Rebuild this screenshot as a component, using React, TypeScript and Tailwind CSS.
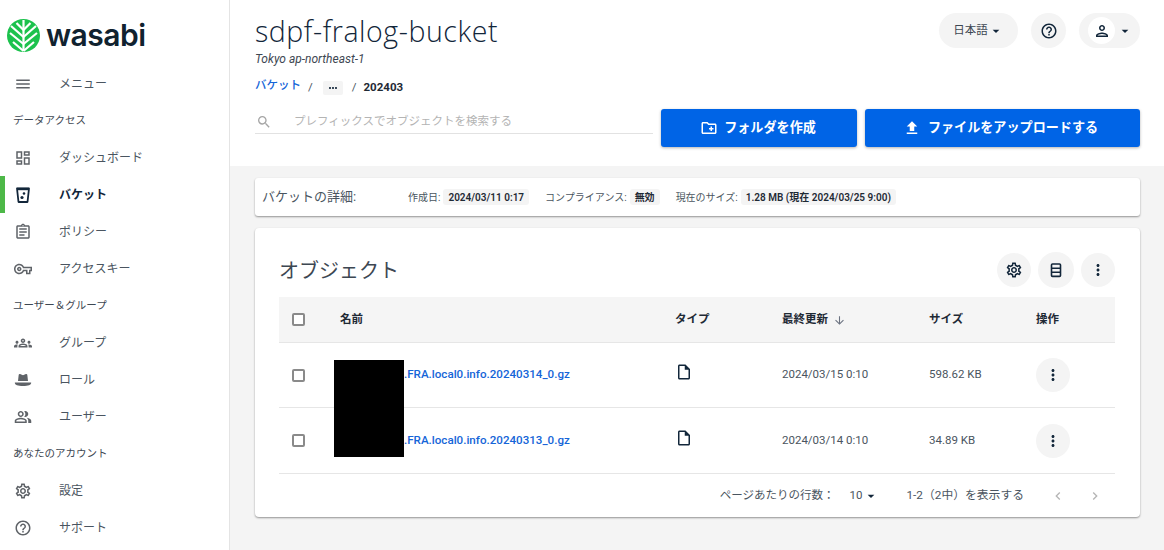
import {
  MdMenu,
  MdOutlineDashboard,
  MdOutlineAssignment,
  MdOutlineVpnKey,
  MdOutlineGroups,
  MdOutlinePeopleAlt,
  MdOutlineSettings,
  MdHelpOutline,
  MdOutlineInsertDriveFile,
  MdMoreVert,
  MdMoreHoriz,
  MdFileUpload,
  MdOutlineCreateNewFolder,
  MdSearch,
  MdArrowDropDown,
  MdOutlinePerson,
  MdArrowDownward,
  MdChevronLeft,
  MdChevronRight,
} from 'react-icons/md';

function BucketIcon() {
  return (
    <svg className="w-[18px] h-[18px]" viewBox="0 0 18 18" fill="none">
      <path d="M3 2.500h12L13.500 16h-9L3 2.500z" stroke="#12263a" strokeWidth="1.800" strokeLinejoin="round" />
      <path d="M3 3h12" stroke="#12263a" strokeWidth="2.400" />
      <circle cx="10" cy="7.500" r="1.300" fill="#12263a" />
      <circle cx="8" cy="11.500" r="1.600" fill="#12263a" />
    </svg>
  );
}

function HatIcon() {
  return (
    <svg className="w-[18px] h-[18px]" viewBox="0 0 18 18" fill="#5f6368">
      <path d="M4 10l.7-6.200c.1-.7.8-1 1.400-.7L9 4.200l2.900-1.100c.6-.3 1.300 0 1.400.7L14 10H4z" />
      <path d="M.8 11.500h16.400c0 2.600-3 3.500-8.200 3.500S.8 14.100.8 11.500z" />
    </svg>
  );
}

function LogoMark() {
  return (
    <svg className="w-[33px] h-[33px] shrink-0" viewBox="0 0 33 33">
      <circle cx="16.500" cy="16.500" r="16.500" fill="#1cc24d" />
      <g fill="none" stroke="#fff" strokeWidth="2.200">
        <path d="M16.500 1v31" />
        <path d="M16.500 11L9.500 4M16.500 11l7-7" />
        <path d="M16.500 18L4 7M16.500 18L29 7" />
        <path d="M16.500 25L3 14M16.500 25L30 14" />
        <path d="M16.500 32L6 23M16.500 32L27 23" />
      </g>
    </svg>
  );
}

function TableIcon() {
  return (
    <svg className="w-[18px] h-[18px]" viewBox="0 0 18 18" fill="none" stroke="#12263a" strokeWidth="1.600">
      <rect x="4.500" y="3" width="9" height="12.400" rx="1" />
      <path d="M4.500 7.200h9M4.500 11.200h9" />
    </svg>
  );
}

function Checkbox() {
  return <span className="block w-[13px] h-[13px] rounded-[2px] border-2 border-[#8a8a8a] bg-white" />;
}

const sideIcon = 'w-[18px] h-[18px] text-[#5f6368]';

const sidebar = [
  { label: 'メニュー', icon: <MdMenu className={sideIcon} /> },
  { section: 'データアクセス' },
  { label: 'ダッシュボード', icon: <MdOutlineDashboard className={sideIcon} /> },
  { label: 'バケット', icon: <BucketIcon />, active: true },
  { label: 'ポリシー', icon: <MdOutlineAssignment className={sideIcon} /> },
  { label: 'アクセスキー', icon: <MdOutlineVpnKey className={sideIcon} /> },
  { section: 'ユーザー＆グループ' },
  { label: 'グループ', icon: <MdOutlineGroups className={sideIcon} /> },
  { label: 'ロール', icon: <HatIcon /> },
  { label: 'ユーザー', icon: <MdOutlinePeopleAlt className={sideIcon} /> },
  { section: 'あなたのアカウント' },
  { label: '設定', icon: <MdOutlineSettings className={sideIcon} /> },
  { label: 'サポート', icon: <MdHelpOutline className={sideIcon} /> },
];

const files = [
  { name: '.FRA.local0.info.20240314_0.gz', updated: '2024/03/15 0:10', size: '598.62 KB' },
  { name: '.FRA.local0.info.20240313_0.gz', updated: '2024/03/14 0:10', size: '34.89 KB' },
];

const details = [
  { label: '作成日:', value: '2024/03/11 0:17' },
  { label: 'コンプライアンス:', value: '無効' },
  { label: '現在のサイズ:', value: '1.28 MB (現在 2024/03/25 9:00)' },
];

const tableCols = 'grid grid-cols-[61px_335px_107px_147px_107px_78px] items-center';

export default function App() {
  return (
    <div className="flex w-[1164px] h-[550px] overflow-hidden bg-white text-[#12263a] font-['Roboto','Noto_Sans_CJK_JP',sans-serif]">
      <aside className="w-[230px] shrink-0 border-r border-[#e4e4e4] bg-white">
        <div className="h-[65px] flex items-center gap-[6px] pl-[7px] pt-[6px]">
          <LogoMark />
          <span className="font-['Inter',sans-serif] text-[30px] font-semibold tracking-[-0.5px] text-[#10222f] leading-none -mt-[2px]">wasabi</span>
        </div>
        {sidebar.map((item, i) =>
          item.section ? (
            <div key={i} className="h-[37px] flex items-center pl-[13px] pt-[1px] text-[10.500px] text-[#3d4752]">
              {item.section}
            </div>
          ) : (
            <div key={i} className="relative h-[37px] flex items-center pl-[14px]">
              {item.active && <span className="absolute left-0 top-0 bottom-0 w-[5px] bg-[#4db848]" />}
              <span className="w-[45px] flex">{item.icon}</span>
              <span className={`text-[12px] ${item.active ? 'font-bold text-[#12263a]' : 'text-[#4a5560]'}`}>{item.label}</span>
            </div>
          ),
        )}
      </aside>

      <main className="flex-1 bg-[#f4f4f4]">
        <header className="h-[166px] bg-white flex justify-between pl-[25px] pr-[25px]">
          <div className="w-[398px]">
            <h1 className="pt-[13px] font-['Open_Sans',sans-serif] text-[28.500px] font-light tracking-[0.55px] leading-[36px] text-[#12263a]">sdpf-fralog-bucket</h1>
            <div className="mt-[2px] text-[12px] italic leading-[16px] text-[#3d4752]">Tokyo ap-northeast-1</div>
            <div className="mt-[13px] flex items-center text-[11.500px] h-[16px]">
              <span className="text-[11.500px] font-medium text-[#1565d8] -mt-[5px]">バケット</span>
              <span className="ml-[7px] text-[#4a5560]">/</span>
              <span className="ml-[10px] w-[20px] h-[14px] rounded-[2px] bg-[#f4f4f4] flex items-center justify-center">
                <MdMoreHoriz className="w-[12px] h-[12px] text-[#12263a]" />
              </span>
              <span className="ml-[9px] text-[#4a5560]">/</span>
              <span className="ml-[7px] font-bold text-[#1f2a35]">202403</span>
            </div>
            <div className="mt-[10px] h-[28px] flex items-center border-b border-[#e2e2e2] pt-[6px] pb-[1px]">
              <MdSearch className="ml-[1px] w-[16px] h-[16px] text-[#a5a5a5]" />
              <span className="ml-[22px] text-[11.500px] text-[#b4b4b4]">プレフィックスでオブジェクトを検索する</span>
            </div>
          </div>

          <div className="flex flex-col items-end">
            <div className="mt-[13px] flex items-center gap-[13px]">
              <button className="h-[35px] w-[79px] rounded-full bg-[#f4f4f4] flex items-center justify-center text-[11.500px] text-[#3d4752]">
                日本語
                <MdArrowDropDown className="w-[16px] h-[16px] text-[#12263a]" />
              </button>
              <button className="w-[35px] h-[35px] rounded-full bg-[#f4f4f4] flex items-center justify-center">
                <MdHelpOutline className="w-[18px] h-[18px] text-[#12263a]" />
              </button>
              <button className="h-[35px] w-[61px] rounded-full bg-[#f4f4f4] flex items-center pl-[9px]">
                <span className="w-[27px] h-[27px] rounded-full bg-white flex items-center justify-center">
                  <MdOutlinePerson className="w-[18px] h-[18px] text-[#12263a]" />
                </span>
                <MdArrowDropDown className="ml-[2px] w-[16px] h-[16px] text-[#12263a]" />
              </button>
            </div>
            <div className="mt-[61px] flex gap-[8px]">
              <button className="w-[196px] h-[38px] rounded-[3px] bg-[#0064e6] shadow-[0_1px_3px_rgba(0,0,0,0.3)] flex items-center justify-center gap-[6px] pr-[2px] text-[13.100px] font-bold text-white">
                <MdOutlineCreateNewFolder className="w-[18px] h-[18px]" />
                フォルダを作成
              </button>
              <button className="w-[275px] h-[38px] rounded-[3px] bg-[#0064e6] shadow-[0_1px_3px_rgba(0,0,0,0.3)] flex items-center justify-center gap-[7px] pr-[4px] text-[13.100px] font-bold text-white">
                <MdFileUpload className="w-[18px] h-[18px]" />
                ファイルをアップロードする
              </button>
            </div>
          </div>
        </header>

        <section className="mx-[25px] mt-[12px] w-[885px] h-[38px] rounded-[3px] bg-white shadow-[0_1px_2px_rgba(0,0,0,0.4)] flex items-center pl-[7px]">
          <span className="w-[146px] text-[13px] text-[#4a5560]">バケットの詳細:</span>
          {details.map((d) => (
            <span key={d.label} className="flex items-center mr-[16px] text-[10px] text-[#4a5560]">
              {d.label}
              <span className="ml-[3px] px-[5px] h-[16px] rounded-[3px] bg-[#f4f4f4] flex items-center font-semibold text-[#1f2a35]">{d.value}</span>
            </span>
          ))}
        </section>

        <section className="mx-[25px] mt-[12px] w-[885px] h-[289px] rounded-[4px] bg-white shadow-[0_1px_2px_rgba(0,0,0,0.4)] pl-[24px] pr-[25px]">
          <div className="h-[69px] flex items-center justify-between pt-[14px]">
            <h2 className="text-[20px] text-[#3d4752] mt-[2px]">オブジェクト</h2>
            <div className="flex items-center gap-[7px]">
              <button className="w-[34px] h-[34px] rounded-full bg-[#f4f4f4] flex items-center justify-center">
                <MdOutlineSettings className="w-[18px] h-[18px] text-[#12263a]" />
              </button>
              <button className="w-[36px] h-[36px] rounded-full bg-[#f4f4f4] flex items-center justify-center">
                <TableIcon />
              </button>
              <button className="w-[34px] h-[34px] rounded-full bg-[#f4f4f4] flex items-center justify-center">
                <MdMoreVert className="w-[18px] h-[18px] text-[#12263a]" />
              </button>
            </div>
          </div>

          <div className="relative">
            <div className={`${tableCols} h-[46px] bg-[#f5f5f5] border-b border-[#e6e6e6] text-[11.500px] font-bold text-[#1f2a35]`}>
              <span className="pl-[13px]"><Checkbox /></span>
              <span className="mt-[1px]">名前</span>
              <span className="mt-[1px]">タイプ</span>
              <span className="mt-[1px] flex items-center gap-[5px]">
                最終更新
                <MdArrowDownward className="w-[13px] h-[13px] text-[#6b7280]" />
              </span>
              <span className="mt-[1px]">サイズ</span>
              <span className="mt-[1px]">操作</span>
            </div>
            {files.map((f, i) => (
              <div key={f.name} className={`${tableCols} ${i === 0 ? 'h-[65px]' : 'h-[66px]'} border-b border-[#e6e6e6] text-[11.500px] text-[#4a5560]`}>
                <span className="pl-[13px]"><Checkbox /></span>
                <a className="pl-[64px] text-[11.600px] font-medium text-[#1565d8]">{f.name}</a>
                <span className="-mt-[6px]"><MdOutlineInsertDriveFile className="w-[18px] h-[18px] text-[#12263a]" /></span>
                <span>{f.updated}</span>
                <span>{f.size}</span>
                <span>
                  <button className="w-[34px] h-[34px] rounded-full bg-[#f4f4f4] flex items-center justify-center">
                    <MdMoreVert className="w-[18px] h-[18px] text-[#12263a]" />
                  </button>
                </span>
              </div>
            ))}
            <div className="absolute left-[55px] top-[63px] w-[70px] h-[97px] bg-black" />
            <div className="h-[43px] flex items-center justify-end text-[11.500px] text-[#4a5560]">
              <span>ページあたりの行数：</span>
              <span className="ml-[15px]">10</span>
              <MdArrowDropDown className="ml-[1px] w-[16px] h-[16px] text-[#12263a]" />
              <span className="ml-[27px] text-[11.800px]">1-2（2中）を表示する</span>
              <MdChevronLeft className="ml-[26px] w-[16px] h-[16px] text-[#b5b5b5]" />
              <MdChevronRight className="ml-[21px] mr-[12px] w-[16px] h-[16px] text-[#b5b5b5]" />
            </div>
          </div>
        </section>
      </main>
    </div>
  );
}
